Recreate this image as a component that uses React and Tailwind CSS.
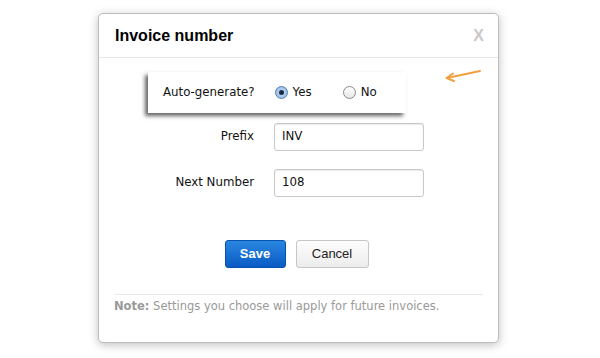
export default function App() {
  const lucida = { fontFamily: '"DejaVu Sans", sans-serif' };
  return (
    <div className="w-[600px] h-[358px] bg-white relative" style={{ fontFamily: '"Liberation Sans", Arial, sans-serif' }}>
      <div className="absolute left-[98px] top-[13px] w-[401px] h-[330px] bg-white border border-[#bdbdbd] rounded-[5px] shadow-[0_2px_10px_rgba(0,0,0,0.25)] flex flex-col">
        <div className="h-[44px] border-b border-[#e5e5e5] flex items-center justify-between pl-[16px] pr-[14px]">
          <span className="text-[16px] font-bold text-black">Invoice number</span>
          <span className="text-[16px] font-bold text-[#c8c8c8]">X</span>
        </div>
        <div className="relative flex-1 flex flex-col" style={lucida}>
          <div className="ml-[49px] mt-[14px] w-[258px] h-[41px] bg-white shadow-[-3px_3px_4px_rgba(0,0,0,0.6)] flex items-center text-[11.8px] text-[#111]">
            <span className="ml-[15px]">Auto-generate?</span>
            <span className="ml-[20px] flex items-center gap-[5px]">
              <span className="w-[13px] h-[13px] rounded-full border border-[#5a7ca8] bg-[radial-gradient(circle,#cfe3fa,#7fb1e8)] flex items-center justify-center">
                <span className="w-[5px] h-[5px] rounded-full bg-[#1b2a40]"></span>
              </span>
              Yes
            </span>
            <span className="ml-[31px] flex items-center gap-[5px]">
              <span className="w-[13px] h-[13px] rounded-full border border-[#8a8a8a] bg-[linear-gradient(#fff,#e6e6e6)]"></span>
              No
            </span>
          </div>
          <svg className="absolute left-[345px] top-[11px]" width="40" height="16" viewBox="0 0 40 16">
            <path d="M36 2 L3 9" stroke="#f0a040" strokeWidth="2" fill="none" strokeLinecap="round" />
            <path d="M9 4.5 L2.5 9 L10 12" stroke="#f0a040" strokeWidth="2" fill="none" strokeLinecap="round" strokeLinejoin="round" />
          </svg>
          <div className="mt-[10px] flex items-center h-[28px] text-[11.8px] text-[#111]">
            <span className="w-[155px] text-right">Prefix</span>
            <div className="ml-[20px] w-[150px] h-[28px] border border-[#c8c8c8] rounded-[3px] shadow-[inset_0_1px_1px_rgba(0,0,0,0.08)] flex items-center pl-[7px]">INV</div>
          </div>
          <div className="mt-[18px] flex items-center h-[28px] text-[11.8px] text-[#111]">
            <span className="w-[155px] text-right">Next Number</span>
            <div className="ml-[20px] w-[150px] h-[28px] border border-[#c8c8c8] rounded-[3px] shadow-[inset_0_1px_1px_rgba(0,0,0,0.08)] flex items-center pl-[7px]">108</div>
          </div>
          <div className="mt-[43px] flex justify-center gap-[10px] pr-[4px]" style={{ fontFamily: '"Liberation Sans", Arial, sans-serif' }}>
            <div className="w-[61px] h-[28px] rounded-[3px] bg-[linear-gradient(#2a86e0,#0a5bc4)] border border-[#0a52b0] text-white font-bold text-[13px] flex items-center justify-center">Save</div>
            <div className="w-[73px] h-[28px] rounded-[3px] bg-[linear-gradient(#fdfdfd,#ececec)] border border-[#c6c6c6] text-[#222] text-[13px] flex items-center justify-center">Cancel</div>
          </div>
          <div className="mx-[15px] mt-[26px] border-t border-[#e8e8e8] pt-[3px] text-[11.5px] text-[#999]">
            <span className="font-bold">Note:</span> Settings you choose will apply for future invoices.
          </div>
        </div>
      </div>
    </div>
  );
}
